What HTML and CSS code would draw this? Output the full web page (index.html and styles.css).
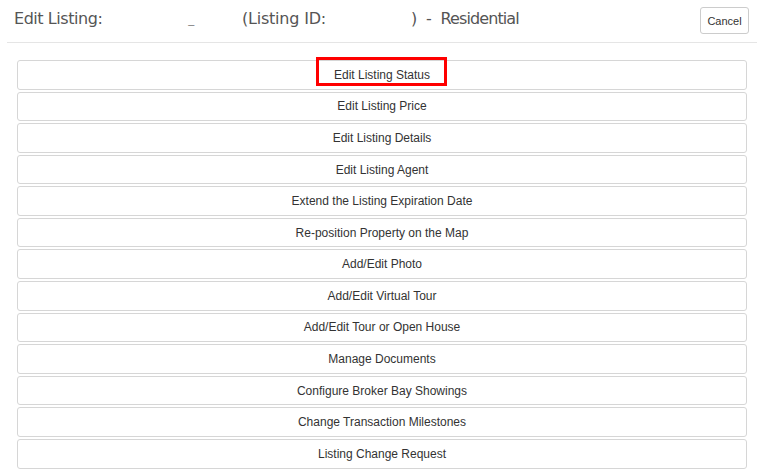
FILE: index.html
```html
<!DOCTYPE html>
<html>
<head>
<meta charset="utf-8">
<link rel="stylesheet" href="styles.css">
</head>
<body>
<div class="modal">
  <div class="modal-header">
    <h4 class="title">
      <span class="t-edit">Edit Listing:</span>
      <span class="t-addr">_</span>
      <span class="t-id">(Listing ID:</span>
      <span class="t-type">) - Residential</span>
    </h4>
    <button class="cancel">Cancel</button>
  </div>
  <div class="modal-body">
    <button class="opt"><span class="hl">Edit Listing Status</span></button>
    <button class="opt">Edit Listing Price</button>
    <button class="opt">Edit Listing Details</button>
    <button class="opt">Edit Listing Agent</button>
    <button class="opt">Extend the Listing Expiration Date</button>
    <button class="opt">Re-position Property on the Map</button>
    <button class="opt">Add/Edit Photo</button>
    <button class="opt">Add/Edit Virtual Tour</button>
    <button class="opt">Add/Edit Tour or Open House</button>
    <button class="opt">Manage Documents</button>
    <button class="opt">Configure Broker Bay Showings</button>
    <button class="opt">Change Transaction Milestones</button>
    <button class="opt">Listing Change Request</button>
  </div>
</div>
</body>
</html>
```
FILE: styles.css
```css
html, body {
  margin: 0;
  padding: 0;
  background: #fff;
}
.modal {
  width: 770px;
  font-family: "Liberation Sans", Arial, sans-serif;
}
.modal-header {
  display: flex;
  align-items: flex-start;
  justify-content: space-between;
  margin: 0 13px 0 7px;
  padding: 7px 8px 0 7px;
  height: 35px;
  border-bottom: 1px solid #e5e5e5;
}
.title {
  margin: 0;
  padding-top: 3px;
  font-family: "DejaVu Sans", Verdana, sans-serif;
  font-weight: normal;
  font-size: 16px;
  letter-spacing: -0.45px;
  color: #555;
  line-height: 18px;
  display: flex;
  white-space: nowrap;
}
.t-edit { margin-left: 0; }
.t-addr { margin-left: 86px; color: #888; font-size: 12px; }
.t-id { margin-left: 48px; letter-spacing: -0.2px; }
.t-type { margin-left: 85px; letter-spacing: -0.9px; word-spacing: 5.5px; }
.cancel {
  width: 49px;
  height: 27px;
  padding: 0;
  background: #fff;
  border: 1px solid #ccc;
  border-radius: 3px;
  font-family: "Liberation Sans", Arial, sans-serif;
  font-size: 11px;
  color: #333;
}
.modal-body {
  display: flex;
  flex-direction: column;
  gap: 2px;
  padding: 17px 0 0 17px;
  width: 730px;
}
.opt {
  position: relative;
  height: 29.58px;
  padding: 0;
  background: #fff;
  border: 1px solid #d6d6d6;
  border-radius: 3px;
  font-family: "Liberation Sans", Arial, sans-serif;
  font-size: 12px;
  color: #333;
  text-align: center;
}
.hl {
  position: relative;
}
.hl::after {
  content: "";
  position: absolute;
  left: -18px;
  right: -17px;
  top: -11px;
  bottom: -4px;
  border: 3px solid #f00;
}
```
